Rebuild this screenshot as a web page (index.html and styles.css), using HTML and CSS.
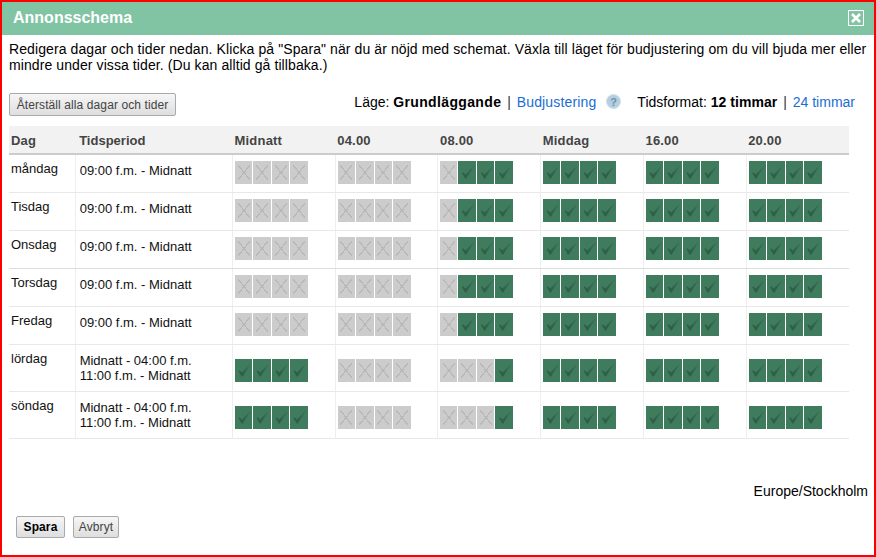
FILE: index.html
```html
<!DOCTYPE html>
<html lang="sv">
  <head>
    <meta charset="UTF-8" />
    <title>Annonsschema</title>
    <link rel="stylesheet" href="styles.css">
  </head>
  <body>
    <div class="dialog">
      <div class="titlebar">
        <h1>Annonsschema</h1>
        <svg class="close" width="16" height="16" viewBox="0 0 16 16">
          <rect x="0.5" y="0.5" width="15" height="15" fill="none" stroke="#fff" />
          <path d="M4 4 L12 12 M12 4 L4 12" stroke="#fff" stroke-width="2.6" />
        </svg>
      </div>

      <p class="intro">Redigera dagar och tider nedan. Klicka på "Spara" när du är nöjd med schemat. Växla till läget för budjustering om du vill bjuda mer eller mindre under vissa tider. (Du kan alltid gå tillbaka.)</p>

      <div class="toolbar">
        <button class="btn">Återställ alla dagar och tider</button>
        <div class="modes">
          <span>Läge: <b>Grundläggande</b> <span class="sep">|</span> <a class="mode-link" href="#">Budjustering</a></span>
          <svg class="help" width="15" height="15" viewBox="0 0 15 15">
            <circle cx="7.5" cy="7.5" r="7" fill="#b4cfdf" stroke="#cfe0ea" />
            <text x="7.5" y="11.5" text-anchor="middle" class="help-mark">?</text>
          </svg>
          <span class="format">Tidsformat: <b>12 timmar</b> <span class="sep">|</span> <a href="#">24 timmar</a></span>
        </div>
      </div>

      <table class="schema">
        <colgroup>
          <col class="c-day"><col class="c-time">
          <col class="c-h"><col class="c-h"><col class="c-h"><col class="c-h"><col class="c-h"><col class="c-h">
        </colgroup>
        <thead>
          <tr><th>Dag</th><th class="th-time">Tidsperiod</th><th>Midnatt</th><th>04.00</th><th>08.00</th><th>Middag</th><th>16.00</th><th>20.00</th></tr>
        </thead>
        <tbody>
          <tr>
            <td class="day">måndag</td>
            <td class="time">09:00 f.m. - Midnatt</td>
            <td><div class="q"><i></i><i></i><i></i><i></i></div></td>
            <td><div class="q"><i></i><i></i><i></i><i></i></div></td>
            <td><div class="q"><i></i><i class="on"></i><i class="on"></i><i class="on"></i></div></td>
            <td><div class="q"><i class="on"></i><i class="on"></i><i class="on"></i><i class="on"></i></div></td>
            <td><div class="q"><i class="on"></i><i class="on"></i><i class="on"></i><i class="on"></i></div></td>
            <td><div class="q"><i class="on"></i><i class="on"></i><i class="on"></i><i class="on"></i></div></td>
          </tr>
          <tr>
            <td class="day">Tisdag</td>
            <td class="time">09:00 f.m. - Midnatt</td>
            <td><div class="q"><i></i><i></i><i></i><i></i></div></td>
            <td><div class="q"><i></i><i></i><i></i><i></i></div></td>
            <td><div class="q"><i></i><i class="on"></i><i class="on"></i><i class="on"></i></div></td>
            <td><div class="q"><i class="on"></i><i class="on"></i><i class="on"></i><i class="on"></i></div></td>
            <td><div class="q"><i class="on"></i><i class="on"></i><i class="on"></i><i class="on"></i></div></td>
            <td><div class="q"><i class="on"></i><i class="on"></i><i class="on"></i><i class="on"></i></div></td>
          </tr>
          <tr class="dark">
            <td class="day">Onsdag</td>
            <td class="time">09:00 f.m. - Midnatt</td>
            <td><div class="q"><i></i><i></i><i></i><i></i></div></td>
            <td><div class="q"><i></i><i></i><i></i><i></i></div></td>
            <td><div class="q"><i></i><i class="on"></i><i class="on"></i><i class="on"></i></div></td>
            <td><div class="q"><i class="on"></i><i class="on"></i><i class="on"></i><i class="on"></i></div></td>
            <td><div class="q"><i class="on"></i><i class="on"></i><i class="on"></i><i class="on"></i></div></td>
            <td><div class="q"><i class="on"></i><i class="on"></i><i class="on"></i><i class="on"></i></div></td>
          </tr>
          <tr>
            <td class="day">Torsdag</td>
            <td class="time">09:00 f.m. - Midnatt</td>
            <td><div class="q"><i></i><i></i><i></i><i></i></div></td>
            <td><div class="q"><i></i><i></i><i></i><i></i></div></td>
            <td><div class="q"><i></i><i class="on"></i><i class="on"></i><i class="on"></i></div></td>
            <td><div class="q"><i class="on"></i><i class="on"></i><i class="on"></i><i class="on"></i></div></td>
            <td><div class="q"><i class="on"></i><i class="on"></i><i class="on"></i><i class="on"></i></div></td>
            <td><div class="q"><i class="on"></i><i class="on"></i><i class="on"></i><i class="on"></i></div></td>
          </tr>
          <tr>
            <td class="day">Fredag</td>
            <td class="time">09:00 f.m. - Midnatt</td>
            <td><div class="q"><i></i><i></i><i></i><i></i></div></td>
            <td><div class="q"><i></i><i></i><i></i><i></i></div></td>
            <td><div class="q"><i></i><i class="on"></i><i class="on"></i><i class="on"></i></div></td>
            <td><div class="q"><i class="on"></i><i class="on"></i><i class="on"></i><i class="on"></i></div></td>
            <td><div class="q"><i class="on"></i><i class="on"></i><i class="on"></i><i class="on"></i></div></td>
            <td><div class="q"><i class="on"></i><i class="on"></i><i class="on"></i><i class="on"></i></div></td>
          </tr>
          <tr class="tall">
            <td class="day">lördag</td>
            <td class="time">Midnatt - 04:00 f.m.<br>11:00 f.m. - Midnatt</td>
            <td><div class="q"><i class="on"></i><i class="on"></i><i class="on"></i><i class="on"></i></div></td>
            <td><div class="q"><i></i><i></i><i></i><i></i></div></td>
            <td><div class="q"><i></i><i></i><i></i><i class="on"></i></div></td>
            <td><div class="q"><i class="on"></i><i class="on"></i><i class="on"></i><i class="on"></i></div></td>
            <td><div class="q"><i class="on"></i><i class="on"></i><i class="on"></i><i class="on"></i></div></td>
            <td><div class="q"><i class="on"></i><i class="on"></i><i class="on"></i><i class="on"></i></div></td>
          </tr>
          <tr class="tall">
            <td class="day">söndag</td>
            <td class="time">Midnatt - 04:00 f.m.<br>11:00 f.m. - Midnatt</td>
            <td><div class="q"><i class="on"></i><i class="on"></i><i class="on"></i><i class="on"></i></div></td>
            <td><div class="q"><i></i><i></i><i></i><i></i></div></td>
            <td><div class="q"><i></i><i></i><i></i><i class="on"></i></div></td>
            <td><div class="q"><i class="on"></i><i class="on"></i><i class="on"></i><i class="on"></i></div></td>
            <td><div class="q"><i class="on"></i><i class="on"></i><i class="on"></i><i class="on"></i></div></td>
            <td><div class="q"><i class="on"></i><i class="on"></i><i class="on"></i><i class="on"></i></div></td>
          </tr>
        </tbody>
      </table>

      <div class="zone">Europe/Stockholm</div>

      <div class="actions">
        <button class="btn primary">Spara</button>
        <button class="btn">Avbryt</button>
      </div>
    </div>
  </body>
</html>
```

FILE: styles.css
```css
html,
body {
  margin: 0;
  height: 100%;
  overflow: hidden;
}
body {
  font-family: "Liberation Sans", Arial, sans-serif;
  font-size: 14px;
  line-height: 16px;
  color: #000;
  background: #fff;
}
.dialog {
  box-sizing: border-box;
  height: 557px;
  border: 2px solid #f00;
}
.titlebar {
  display: flex;
  align-items: center;
  justify-content: space-between;
  height: 33px;
  padding: 0 10px 2px 11px;
  box-sizing: border-box;
  background-color: #80c4a3;
}
.titlebar h1 {
  margin: 0;
  font-size: 16px;
  font-weight: bold;
  color: #fff;
}
.intro {
  margin: 6px 5px 0 7px;
  letter-spacing: 0.09px;
}
.toolbar {
  display: flex;
  justify-content: space-between;
  margin: 20px 19px 0 7px;
}
.btn {
  height: 23px;
  padding: 0 6px;
  font-family: inherit;
  font-size: 12px;
  letter-spacing: 0.1px;
  color: #444;
  border: 1px solid #aaa;
  border-radius: 2px;
  background: linear-gradient(#f6f6f6, #dedede);
}
.toolbar .btn {
  width: 167px;
  padding: 0;
}
.modes {
  display: flex;
  align-items: flex-start;
  padding-top: 1px;
}
.modes b {
  letter-spacing: 0.35px;
}
.modes a {
  color: #1a6dd6;
  text-decoration: none;
}
.modes a.mode-link {
  letter-spacing: 0.15px;
}
.sep {
  margin: 0 2px;
  color: #333;
}
.help {
  margin-left: 10px;
}
.help-mark {
  font-size: 11px;
  font-weight: bold;
  fill: #6d93aa;
}
.format {
  margin-left: 16px;
}
.format b {
  letter-spacing: 0.05px;
}
.schema {
  table-layout: fixed;
  border-collapse: collapse;
  width: 840px;
  margin: 10px 0 0 7px;
}
.c-day { width: 66px; }
.c-time { width: 157px; }
.c-h { width: 102.5px; }
.schema th {
  height: 28px;
  padding: 2px 0 0 2px;
  box-sizing: border-box;
  font-size: 13px;
  font-weight: bold;
  letter-spacing: 0.2px;
  text-align: left;
  color: #444;
  background-color: #f2f2f2;
  border-bottom: 2px solid #ccc;
}
.schema th.th-time {
  padding-left: 4px;
  letter-spacing: 0;
}
.schema td {
  height: 38px;
  padding: 0 0 8px 2px;
  box-sizing: border-box;
  font-size: 13px;
  line-height: 15px;
  color: #111;
  vertical-align: bottom;
  border-bottom: 1px solid #e8e8e8;
  border-left: 1px solid #eee;
}
.schema tr.tall td {
  height: 47px;
  padding-bottom: 9px;
}
.schema tr.dark td {
  border-bottom-color: #ddd;
}
.schema td:first-child {
  border-left: none;
}
.schema td.day,
.schema tr.tall td.day {
  vertical-align: top;
  padding: 6px 0 0 2px;
}
.schema td.time {
  vertical-align: middle;
  padding: 0 0 6px 4px;
}
.schema tr.tall td.time {
  padding-bottom: 0;
}
.q {
  display: flex;
  gap: 1px;
}
.q i {
  position: relative;
  width: 17px;
  height: 23px;
  background:
    linear-gradient(to top right, transparent 47%, #b8b8b8 47%, #b8b8b8 53%, transparent 53%) center / 12px 15px no-repeat,
    linear-gradient(to bottom right, transparent 47%, #b8b8b8 47%, #b8b8b8 53%, transparent 53%) center / 12px 15px no-repeat,
    #ccc;
}
.q i:nth-child(even) {
  width: 18px;
}
.q i.on {
  background: #3f7b5d;
}
.q i.on::after {
  content: "";
  position: absolute;
  inset: 0;
  background: linear-gradient(to right, #2f5f47 45%, #386d53 80%);
  clip-path: polygon(3.5px 12.5px, 4.5px 11.8px, 7px 14px, 15px 6px, 15.3px 6.4px, 7.8px 18px, 6.5px 18px);
}
.zone {
  margin: 44px 6px 0 0;
  text-align: right;
}
.actions {
  display: flex;
  gap: 8px;
  margin: 17px 0 0 14px;
}
.actions .btn {
  height: 22px;
  padding: 0;
  width: 46px;
}
.actions .primary {
  width: 49px;
  font-weight: bold;
  color: #000;
}
```
